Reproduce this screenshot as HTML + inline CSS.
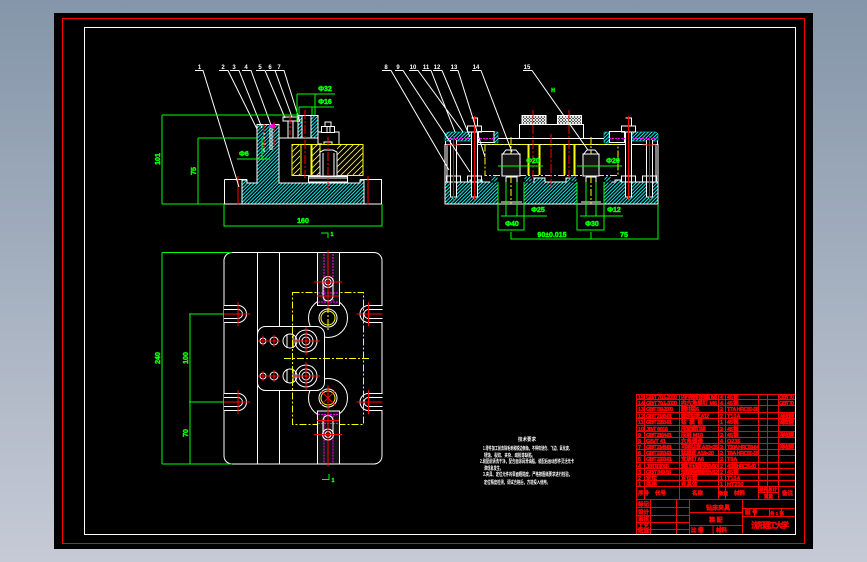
<!DOCTYPE html>
<html><head><meta charset="utf-8"><style>
html,body{margin:0;padding:0;width:867px;height:562px;overflow:hidden;background:linear-gradient(#8496a9,#c6cad6)}
svg{position:absolute;left:0;top:0}
text{font-family:"Liberation Sans","Noto Sans CJK SC",sans-serif;font-weight:bold}
.w{stroke:#fff;fill:none;stroke-width:1}
.t{fill:#fff;font-size:6px}
.g{stroke:#0f0;fill:none;stroke-width:1}
.gt{fill:#0f0;font-size:7px;text-anchor:middle;stroke:#0f0;stroke-width:.5}
.r{stroke:#f00;fill:none;stroke-width:1}
.y{stroke:#ff0;fill:none;stroke-width:1}
.yd{stroke:#ff0;fill:none;stroke-width:1;stroke-dasharray:7 2 2 2}
.rd{stroke:#f00;fill:none;stroke-width:1;stroke-dasharray:9 2 2 2}
.m{stroke:#f0f;fill:none;stroke-width:1;stroke-dasharray:2 1}
.l{fill:#f00;font-size:5.5px;stroke:#f00;stroke-width:.4}
.c{text-anchor:middle}
</style></head><body>
<svg width="867" height="562" viewBox="0 0 867 562">
<defs>
<pattern id="hc" width="3.500" height="3.500" patternUnits="userSpaceOnUse"><rect width="3.500" height="3.500" fill="#000"/><path d="M-1 1L1 -1M0 3.500L3.500 0M2.500 4.500L4.500 2.500" stroke="#0ff" stroke-width=".9"/></pattern>
<pattern id="hy" width="6" height="6" patternUnits="userSpaceOnUse"><rect width="6" height="6" fill="#000"/><path d="M-1 1L1 -1M0 6L6 0M5 7L7 5" stroke="#ff0" stroke-width=".8"/></pattern>
<pattern id="kn" width="3" height="3" patternUnits="userSpaceOnUse"><rect width="3" height="3" fill="#000"/><path d="M0 0L3 3M3 0L0 3" stroke="#fff" stroke-width=".9"/></pattern>
<g id="bolt">
<rect x="-3" y="10" width="6" height="65" fill="#000"/>
<path class="w" d="M-7 4H7V10H-7ZM-3 -4H3V4M-3 10V75M3 10V75M-3 75H3M-7 54H7V60H-7Z"/>
<path class="r" d="M0 -6V78"/>
</g>
<g id="boltS">
<rect x="-3" y="18" width="6" height="57" fill="#000"/>
<path class="w" d="M-3 18V75M3 18V75M-3 75H3M-7 54H7V60H-7Z"/>
<path class="r" d="M0 14V78M-7 23H7"/>
</g>
<g id="slotL">
<path class="w" d="M224 -8.500H238A8.500 8.500 0 0 1 238 8.500H224M224 -4.500H238A4.500 4.500 0 0 1 238 4.500H224"/>
<path class="r" d="M224 0H250M238 -12V12"/>
</g>
<g id="pair">
<circle class="w" cx="290" r="7"/><path class="w" d="M287 -7V7M293 -7V7"/>
<circle class="w" cx="306" r="11"/><circle class="w" cx="306" r="7"/><circle class="w" cx="306" r="4"/>
<path class="r" d="M292 0H320M306 -14V14"/>
<circle class="w" cx="274" r="4"/><circle class="w" cx="263" r="3"/>
<path class="r" d="M268 0H280M274 -6V6M258 0H268M263 -5V5"/>
</g>
<g id="clampT">
<rect x="317.500" y="252.500" width="22" height="53" fill="#141414" stroke="#fff"/>
<path class="m" d="M324 254V302M333 254V302M318 293H338M318 302H338"/>
<path class="w" d="M323 282V296A5 5 0 0 0 333 296V282"/>
<circle class="w" cx="328" cy="282" r="5.500"/><circle class="w" cx="328" cy="282" r="3"/>
<path class="r" d="M314 282H342M328 250V308M317 296H339"/>
</g>
</defs>

<rect x="54" y="13" width="759" height="536" fill="#000"/>
<rect x="62.500" y="18.500" width="742" height="525" fill="none" stroke="#f00"/>
<rect x="84.500" y="27.500" width="711" height="507" fill="none" stroke="#fff"/>

<!-- FRONT VIEW -->
<path fill="url(#hc)" stroke="#fff" d="M242 180H247V183H257V124.500H279V183H360V180H364V204H242Z"/>
<path class="w" d="M224.500 204H382M224.500 179.500H247M360 179.500H381.500V204M224.500 179.500V204M242 180V204M364 180V204"/>
<path class="r" d="M238 176V205M368 176V205"/>
<rect x="292" y="144.500" width="71" height="31" fill="url(#hy)" stroke="#ff0"/>
<rect x="300" y="145" width="12" height="30" fill="#000"/>
<rect x="320" y="145" width="17" height="30.500" fill="#000"/>
<path class="y" d="M301 145V175M311 145V175M312 145V175M320 145V175"/>
<rect x="308.500" y="176.500" width="39" height="5.500" fill="#000" stroke="#fff"/>
<path class="w" d="M320 176V152L324 150H333L337 152V176M323 153V176M334 153V176M308 178H348"/>
<path class="w" d="M279 138H318M318 132H339V144M318 138V144H322M324 144V142H332V144"/>
<rect x="298" y="115.500" width="20" height="22.500" fill="url(#hc)" stroke="#fff"/>
<rect x="302" y="115.500" width="9" height="22.500" fill="#000" stroke="#fff"/>
<rect x="321.500" y="126.500" width="13" height="6" fill="#000" stroke="#fff"/>
<path class="w" d="M325 126V122H331V126M327 126V132M330 126V132"/>
<path class="w" d="M283 117H297V121H283ZM288 121V138M293 121V138M270 124V150M272 125V150M264 124V152M262 144H266"/>
<rect x="269" y="124" width="6" height="4" fill="#f0f"/>
<path class="r" d="M264 124V150M274 122V151M290 115V135M305 110V178M328 137V190" stroke-dasharray="9 2 2 2"/>
<path class="w" d="M195 70.500H203L239 187M219 70.500H228L257 129M230 70.500H239L262 128M242 70.500H251L271 125M256 70.500H265L285 118M266 70.500H275L292 117M275 70.500H284L300 122"/>
<text class="t c" x="199.500" y="69">1</text><text class="t c" x="223" y="69">2</text><text class="t c" x="234" y="69">3</text><text class="t c" x="246" y="69">4</text><text class="t c" x="260" y="69">5</text><text class="t c" x="270" y="69">6</text><text class="t c" x="279" y="69">7</text>
<path class="g" d="M162 115V204M162 115H298M162 204H224M198 138V204M198 138H258M224 204V226H382V204M237 159H270M262 138V160M297 94V122M297 94H335M315 94V115M299 107V115M299 107H334M312 107V115"/>
<text class="gt" transform="translate(160,159) rotate(-90)">101</text>
<text class="gt" transform="translate(196,171) rotate(-90)">75</text>
<text class="gt" x="303" y="223">160</text>
<text class="gt" x="244" y="156">Φ6</text>
<text class="gt" x="325" y="91">Φ32</text>
<text class="gt" x="325" y="104">Φ16</text>
<path class="g" d="M321 233H328V238"/><text class="gt" x="332" y="236" style="font-size:5px">1</text>

<!-- SIDE VIEW -->
<path fill="url(#hc)" stroke="#fff" d="M445 182H470V180H482V182H498V204H445Z"/>
<path fill="url(#hc)" stroke="#fff" d="M524 182H534V178H545V182H566V178H577V204H524Z"/>
<path fill="url(#hc)" stroke="#fff" d="M604 182H615V180H621V182H658V204H604Z"/>
<rect x="498" y="176" width="26" height="28" fill="#000"/>
<rect x="577" y="176" width="27" height="28" fill="#000"/>
<path class="w" d="M445 204H658M498 182V204M524 182V204M577 182V204M604 182V204M506 177H517V202M506 177V202M501 202H522M586 177H596V202M586 177V202M581 202H601"/>
<path fill="url(#hc)" stroke="#000" d="M491 176H498V182H491ZM524 176H532V182H524ZM571 176H577V182H571ZM604 176H611V182H604Z"/>
<rect x="445.500" y="138.500" width="212" height="6" fill="#000" stroke="#fff"/>
<path class="w" d="M445 144V182M658 144V182M447 144V182M656 144V182M519.500 138V124.500H583.500V138"/>
<rect x="522" y="115.500" width="24" height="9" fill="url(#kn)" stroke="#fff"/>
<rect x="557.500" y="115.500" width="24" height="9" fill="url(#kn)" stroke="#fff"/>
<!-- clamps -->
<path fill="url(#hc)" stroke="#0ff" stroke-width=".5" d="M445 134L448 132H472V141H445Z"/>
<path fill="url(#hc)" stroke="#0ff" stroke-width=".5" d="M494 132H498V143H494Z"/>
<path fill="url(#hc)" stroke="#0ff" stroke-width=".5" d="M604 132H609V143H604Z"/>
<path fill="url(#hc)" stroke="#0ff" stroke-width=".5" d="M632 132H656L658 134V141H632Z"/>
<rect x="478.500" y="131.500" width="15.500" height="11" fill="#000" stroke="#fff"/>
<rect x="609.500" y="131.500" width="15" height="11" fill="#000" stroke="#fff"/>
<path class="m" d="M447 138.500H494M609 138.500H656"/>
<path class="yd" d="M485 144.500V175.500H618V144.500H485M511 137V204M591 137V204"/>
<path class="y" d="M528 145V175M529 145V175M539 145V175M540 145V175M564 145V175M565 145V175M574 145V175M575 145V175"/>
<rect x="502" y="154" width="18" height="22" fill="#141414" stroke="#fff"/>
<rect x="583" y="154" width="16" height="22" fill="#141414" stroke="#fff"/>
<path class="w" d="M502 155L506 150H516L520 155M583 155L587 150H595L599 155"/>
<use href="#bolt" x="474.500" y="122"/>
<use href="#bolt" x="628.500" y="122"/>
<use href="#boltS" x="453.500" y="122"/>
<use href="#boltS" x="649.500" y="122"/>
<path class="rd" d="M533 110V178M569 110V178M551 134V187"/>
<path class="w" d="M382 70.500H391L449 170M395 70.500H403L470 172M409 70.500H418L463 132M422 70.500H431L455 132M433 70.500H442L470 137M450 70.500H458L485 157M472 70.500H481L512 152M523 70.500H532L588 150"/>
<text class="t c" x="386" y="69">8</text><text class="t c" x="398" y="69">9</text><text class="t c" x="413" y="69">10</text><text class="t c" x="426" y="69">11</text><text class="t c" x="437" y="69">12</text><text class="t c" x="454" y="69">13</text><text class="t c" x="476" y="69">14</text><text class="t c" x="527" y="69">15</text>
<path class="g" d="M498 166H543M577 166H622M506 182V216M517 182V216M501 216H547M586 182V216M596 182V216M580 216H623M498 182V230H524V182M577 182V230H604V182M511 232V239H658V204M591 232V239"/>
<text class="gt" x="533" y="163">Φ20</text><text class="gt" x="613" y="163">Φ20</text>
<text class="gt" x="538" y="212">Φ25</text><text class="gt" x="614" y="212">Φ12</text>
<text class="gt" x="512" y="226">Φ40</text><text class="gt" x="592" y="226">Φ30</text>
<text class="gt" x="552" y="237">90±0.015</text><text class="gt" x="624" y="237">75</text>
<text class="gt" x="553" y="92" style="font-size:5px">H</text>

<!-- TOP VIEW -->
<path class="w" d="M232 252.500H374A8 8 0 0 1 382 260.500V456A8 8 0 0 1 374 464H232A8 8 0 0 1 224 456V260.500A8 8 0 0 1 232 252.500Z"/>
<rect x="224" y="305" width="24" height="18" fill="#000"/><rect x="224" y="393" width="24" height="18" fill="#000"/>
<rect x="358" y="305" width="25" height="18" fill="#000"/><rect x="358" y="393" width="25" height="18" fill="#000"/>
<use href="#slotL" y="314"/><use href="#slotL" y="402"/>
<g transform="translate(606.500,0) scale(-1,1)"><use href="#slotL" y="314"/><use href="#slotL" y="402"/></g>
<path class="w" d="M257.500 252V464M279.500 252V326M279.500 390V464"/>
<circle class="w" cx="328" cy="318" r="19.500"/><circle class="w" cx="328" cy="398" r="19.500"/>
<circle class="w" cx="328" cy="318" r="9"/><circle class="w" cx="328" cy="398" r="9"/>
<circle class="y" cx="328" cy="318" r="7"/><circle class="y" cx="328" cy="398" r="7"/>
<path class="yd" d="M292.500 292.500H363.500V424.500H292.500ZM284 358.500H370M328 306V330"/>
<path class="r" d="M321 391L335 405M335 391L321 405M328 385V412"/>
<rect x="257.500" y="326.500" width="67" height="64" rx="8" fill="#000" stroke="#fff"/>
<rect x="250" y="327" width="8" height="63" fill="#000"/><path class="w" d="M257.500 326V391"/>
<use href="#pair" y="341"/><use href="#pair" y="376"/>
<path class="yd" d="M292.500 327V390M284 358.500H326"/>
<use href="#clampT"/>
<g transform="translate(0,716.500) scale(1,-1)"><use href="#clampT"/></g>
<path class="g" d="M162 252.500V464M162 252.500H232M162 464H232M190 314V464M189 314H224M189 402H224"/>
<text class="gt" transform="translate(160,358) rotate(-90)">240</text>
<text class="gt" transform="translate(188,358) rotate(-90)">100</text>
<text class="gt" transform="translate(188,433) rotate(-90)">70</text>
<path class="g" d="M322 479.500H329V474"/><text class="gt" x="333" y="482" style="font-size:5px">1</text>

<!-- NOTES -->
<text x="527" y="441" fill="#fff" font-size="5" text-anchor="middle" textLength="18" lengthAdjust="spacingAndGlyphs">技术要求</text>
<g fill="#fff" font-size="5">
<text x="483" y="450" textLength="89" lengthAdjust="spacingAndGlyphs">1.零件加工前去除毛刺和锐边倒角，不得有划伤、飞边、氧化皮、</text>
<text x="484" y="457" textLength="51" lengthAdjust="spacingAndGlyphs">锈蚀、裂纹、夹杂、疏松等缺陷。</text>
<text x="480" y="463" textLength="94" lengthAdjust="spacingAndGlyphs">2.装配前清洗干净，配合面涂润滑油脂，装配后运动部件灵活无卡</text>
<text x="484" y="470" textLength="19" lengthAdjust="spacingAndGlyphs">滞现象发生。</text>
<text x="483" y="476" textLength="89" lengthAdjust="spacingAndGlyphs">3.夹具、定位元件的表面粗糙度，严格按图纸要求进行检验，</text>
<text x="484" y="484" textLength="66" lengthAdjust="spacingAndGlyphs">定位精度检测，调试合格后，方能投入使用。</text>
</g>

<!-- TITLE BLOCK -->
<path class="r" d="M636.500 394V534M637 394.500H795M637 399.500H795M637 405.500H795M637 412.500H795M637 418.500H795M637 425.500H795M637 431.500H795M637 437.500H795M637 443.500H795M637 449.500H795M637 455.500H795M637 462.500H795M637 468.500H795M637 474.500H795M637 480.500H795M637 486.500H795M637 499.500H795M644.500 394V499M679.500 394V499M718.500 394V499M725.500 394V499M758.500 394V499M767.500 394V499M778.500 394V499M758 492.500H778"/>
<path class="r" d="M650.500 499V534M676.500 499V534M689.500 499V534M742.500 499V534M637 507.500H689M637 515.500H689M637 522.500H689M637 529.500H689M689 512.500H742M689 525.500H742M742 508.500H795M742 516.500H795M754.500 508V516M769.500 508V516M781.500 508V516M701 525V534M713 525V534M720 525V534"/>
<g class="l">
<text x="638" y="399">15</text><text x="646" y="399" textLength="31">GB/T 70.1-2000</text><text x="681" y="399" textLength="36">内六角圆柱头螺钉M8</text><text x="720" y="399">4</text><text x="727" y="399">45钢</text><text x="779" y="399" textLength="15">GB/T 70</text>
<text x="638" y="405">14</text><text x="646" y="405" textLength="31">GB/T 70.1-2000</text><text x="681" y="405" textLength="36">内六角螺钉 M6</text><text x="720" y="405">4</text><text x="727" y="405">45钢</text><text x="779" y="405" textLength="15">GB/T 70</text>
<text x="638" y="411">13</text><text x="646" y="411" textLength="27">GB/T 119-2000</text><text x="681" y="411" textLength="18">圆柱销 6</text><text x="720" y="411">2</text><text x="727" y="411" textLength="32">T7A HRC50-55</text>
<text x="638" y="418">12</text><text x="646" y="418" textLength="26">GB/T 2148-91</text><text x="681" y="418" textLength="28">固定钻套 A12</text><text x="720" y="418">2</text><text x="727" y="418">T10A</text><text x="779" y="418" textLength="15">淬火处理</text>
<text x="638" y="424">11</text><text x="646" y="424" textLength="26">GB/T 2263-91</text><text x="681" y="424" textLength="22">钻模板</text><text x="720" y="424">1</text><text x="727" y="424">45钢</text><text x="779" y="424" textLength="15">调质处理</text>
<text x="638" y="431">10</text><text x="646" y="431" textLength="22">JB/T 8016</text><text x="681" y="431" textLength="25">压紧螺钉组</text><text x="720" y="431">2</text><text x="727" y="431">45钢</text>
<text x="638" y="437">9</text><text x="646" y="437" textLength="26">GB/T 2164-91</text><text x="681" y="437" textLength="22">压板 M10</text><text x="720" y="437">2</text><text x="727" y="437">45钢</text><text x="779" y="437" textLength="15">淬火处理</text>
<text x="638" y="443">8</text><text x="646" y="443" textLength="20">GB/T 41</text><text x="681" y="443" textLength="22">六角螺母</text><text x="720" y="443">4</text><text x="727" y="443">Q235</text>
<text x="638" y="449">7</text><text x="646" y="449" textLength="26">GB/T 2148-91</text><text x="681" y="449" textLength="37">可换钻套 A20×25</text><text x="720" y="449">2</text><text x="727" y="449" textLength="32">T10A HRC58-64</text><text x="779" y="449" textLength="15">淬火处理</text>
<text x="638" y="455">6</text><text x="646" y="455" textLength="26">GB/T 2263-91</text><text x="681" y="455" textLength="33">钻模套 A18×20</text><text x="720" y="455">2</text><text x="727" y="455" textLength="32">T8A HRC50-55</text>
<text x="638" y="461">5</text><text x="646" y="461" textLength="26">GB/T 2263-91</text><text x="681" y="461" textLength="23">支承钉 A6</text><text x="720" y="461">2</text><text x="727" y="461">T8A</text>
<text x="638" y="468">4</text><text x="646" y="468" textLength="23">JB/T 8010-95</text><text x="681" y="468" textLength="37">螺钉压紧机构 M10</text><text x="720" y="468">2</text><text x="727" y="468" textLength="29">45钢 HRC35-40</text>
<text x="638" y="474">3</text><text x="646" y="474" textLength="25">GB/T 849-88</text><text x="681" y="474" textLength="37">球面带肩螺母 M12</text><text x="720" y="474">2</text><text x="727" y="474">45钢</text>
<text x="638" y="480">2</text><text x="646" y="480">定位</text><text x="681" y="480">定位销</text><text x="720" y="480">1</text><text x="727" y="480">T10A</text>
<text x="638" y="486">1</text><text x="646" y="486">底座</text><text x="681" y="486">夹具体</text><text x="720" y="486">1</text><text x="727" y="486">HT200</text>
<text x="638" y="495">序号</text><text x="655" y="495">代号</text><text x="692" y="495">名称</text><text x="719" y="495" style="font-size:4.500px">数量</text><text x="734" y="495">材料</text>
<text x="759" y="491" style="font-size:4.500px">单件</text><text x="768" y="491" style="font-size:4.500px">总计</text><text x="764" y="498" style="font-size:4.500px">重量</text><text x="782" y="495">备注</text>
<text x="638" y="506">标记</text><text x="638" y="514">设计</text><text x="638" y="521">审核</text><text x="638" y="528">工艺</text><text x="638" y="533">批准</text>
<text x="706" y="510" style="font-size:6px">钻床夹具</text><text x="709" y="522" style="font-size:6px">装 配</text>
<text x="691" y="532">比 例</text><text x="716" y="532">材料</text>
<text x="745" y="514">图 号</text><text x="770" y="515" style="font-size:4.500px">共 1 张</text>
<text x="751" y="528" style="font-size:8px" textLength="38">沈阳理工大学</text>
</g>
</svg>
</body></html>
